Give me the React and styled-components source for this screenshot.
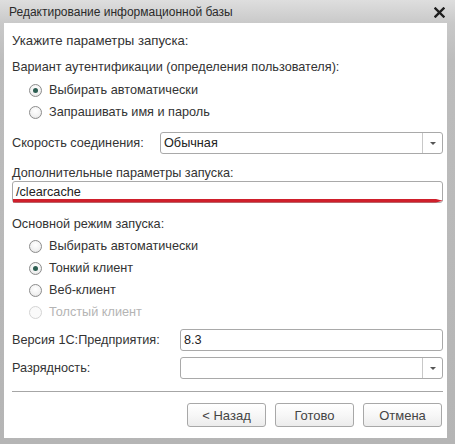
import React from "react";
import styled, { createGlobalStyle } from "styled-components";

const Global = createGlobalStyle`
  html, body { margin: 0; padding: 0; }
  body {
    width: 455px; height: 444px; overflow: hidden;
    font-family: "Liberation Sans", Arial, sans-serif;
    background: #b9b9b9;
  }
`;

const Frame = styled.div`
  width: 455px;
  height: 444px;
  box-sizing: border-box;
  display: flex;
  flex-direction: column;
  padding: 0 8px 6px 4px;
  background: linear-gradient(to bottom, #dedede 0px, #c9c9c9 23px, #bdbdbd 60px, #b5b5b5 100%);
`;

const TitleBar = styled.div`
  height: 23px;
  display: flex;
  align-items: center;
  justify-content: space-between;
  padding: 0 2px 0 5px;
  margin-right: -6px;
`;

const TitleText = styled.span`
  font-size: 12px;
  color: #2a2a2a;
  margin-top: 1px;
`;

const CloseIcon = styled.svg`
  width: 11px;
  height: 11px;
  margin-right: 6px;
  margin-top: 1px;
`;

const Content = styled.div`
  flex: 1;
  background: #fff;
  padding: 10px 4px 10px 8px;
  display: flex;
  flex-direction: column;
  color: #333;
  font-size: 12.7px;
`;

const Label = styled.div`
  height: 16px;
  line-height: 16px;
  white-space: nowrap;
  margin-top: ${(p) => p.$mt || 0}px;
  font-size: ${(p) => p.$size || 12.7}px;
`;

const RadioGroup = styled.div`
  display: flex;
  flex-direction: column;
  padding-left: 17px;
  margin-top: ${(p) => p.$mt || 0}px;
`;

const RadioRow = styled.div`
  height: ${(p) => p.$h || 22}px;
  display: flex;
  align-items: center;
  color: ${(p) => (p.$disabled ? "#b4b4b4" : "#333")};
`;

const RadioCircle = styled.span`
  width: 13px;
  height: 13px;
  box-sizing: border-box;
  border-radius: 50%;
  border: 1px solid ${(p) => (p.$disabled ? "#d4d4d4" : "#8c8c8c")};
  background: ${(p) =>
    p.$disabled ? "#fafafa" : "radial-gradient(circle at 50% 35%, #ffffff 0%, #f1f1f1 60%, #dadada 100%)"};
  display: flex;
  align-items: center;
  justify-content: center;
  margin-right: 7px;
  &::after {
    content: "";
    display: ${(p) => (p.$checked ? "block" : "none")};
    width: 5px;
    height: 5px;
    border-radius: 50%;
    background: #2d5e52;
  }
`;

const FieldRow = styled.div`
  display: flex;
  align-items: center;
  height: 22px;
  margin-top: ${(p) => p.$mt || 0}px;
`;

const FieldLabel = styled.div`
  width: ${(p) => p.$w}px;
  flex: none;
  white-space: nowrap;
`;

const Box = styled.div`
  flex: 1;
  height: 22px;
  box-sizing: border-box;
  border: 1px solid #a9a9a9;
  border-radius: 3px;
  background: #fff;
  display: flex;
  align-items: stretch;
  margin-top: ${(p) => p.$mt || 0}px;
`;

const BoxText = styled.div`
  flex: 1;
  padding-left: 3px;
  line-height: 20px;
  color: #222;
`;

const DropButton = styled.div`
  width: 19px;
  border-left: 1px solid #c8c8c8;
  display: flex;
  align-items: center;
  justify-content: center;
  &::after {
    content: "";
    border-left: 3px solid transparent;
    border-right: 3px solid transparent;
    border-top: 3px solid #555;
  }
`;

const Underlined = styled.div`
  position: relative;
`;

const RedMark = styled.svg`
  position: absolute;
  left: 1px;
  top: 17px;
  width: 430px;
  height: 5px;
`;

const Separator = styled.div`
  height: 1px;
  background: #a6a6a6;
  margin-top: 12px;
`;

const ButtonBar = styled.div`
  display: flex;
  justify-content: flex-end;
  gap: 9px;
  margin-top: 11px;
  padding-right: 1px;
`;

const Button = styled.button`
  width: 79px;
  height: 24px;
  box-sizing: border-box;
  border: 1px solid #a8a8a8;
  border-radius: 3px;
  background: linear-gradient(to bottom, #ffffff 0%, #f7f7f7 50%, #ececec 100%);
  font-family: "Liberation Sans", Arial, sans-serif;
  font-size: 13px;
  color: #444;
  padding: 0;
`;

function Radio({ checked, disabled, children }) {
  return (
    <RadioRow $disabled={disabled}>
      <RadioCircle $checked={checked} $disabled={disabled} />
      {children}
    </RadioRow>
  );
}

function Select({ value }) {
  return (
    <Box>
      <BoxText>{value}</BoxText>
      <DropButton />
    </Box>
  );
}

export default function App() {
  return (
    <>
      <Global />
      <Frame>
        <TitleBar>
          <TitleText>Редактирование информационной базы</TitleText>
          <CloseIcon viewBox="0 0 11 11">
            <path d="M1.5 1.5 L9.5 9.5 M9.5 1.5 L1.5 9.5" stroke="#1e1e1e" strokeWidth="2.4" strokeLinecap="square" />
          </CloseIcon>
        </TitleBar>
        <Content>
          <Label $size={13.2}>Укажите параметры запуска:</Label>
          <Label $mt={10}>Вариант аутентификации (определения пользователя):</Label>
          <RadioGroup $mt={4}>
            <Radio checked>Выбирать автоматически</Radio>
            <Radio>Запрашивать имя и пароль</Radio>
          </RadioGroup>
          <FieldRow $mt={9}>
            <FieldLabel $w={148}>Скорость соединения:</FieldLabel>
            <Select value="Обычная" />
          </FieldRow>
          <Label $mt={11}>Дополнительные параметры запуска:</Label>
          <Underlined>
            <Box>
              <BoxText>/clearcache</BoxText>
            </Box>
            <RedMark viewBox="0 0 430 5" preserveAspectRatio="none">
              <path d="M0 1 L423 1 L430 2.8 L423 4.6 L0 4.6 Z" fill="#cf1f2b" />
            </RedMark>
          </Underlined>
          <Label $mt={13}>Основной режим запуска:</Label>
          <RadioGroup $mt={3}>
            <Radio>Выбирать автоматически</Radio>
            <Radio checked>Тонкий клиент</Radio>
            <Radio>Веб-клиент</Radio>
            <Radio disabled>Толстый клиент</Radio>
          </RadioGroup>
          <FieldRow $mt={6}>
            <FieldLabel $w={168}>Версия 1С:Предприятия:</FieldLabel>
            <Box>
              <BoxText>8.3</BoxText>
            </Box>
          </FieldRow>
          <FieldRow $mt={6}>
            <FieldLabel $w={168}>Разрядность:</FieldLabel>
            <Select value="" />
          </FieldRow>
          <Separator />
          <ButtonBar>
            <Button>&lt; Назад</Button>
            <Button>Готово</Button>
            <Button>Отмена</Button>
          </ButtonBar>
        </Content>
      </Frame>
    </>
  );
}
